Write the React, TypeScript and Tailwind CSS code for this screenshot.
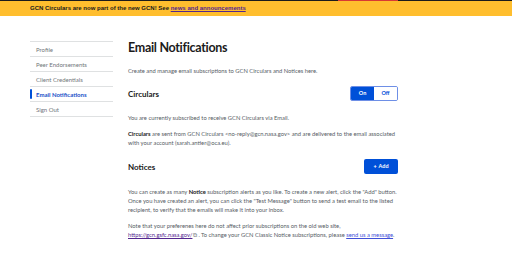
const navItems = [
  { label: "Profile", active: false },
  { label: "Peer Endorsements", active: false },
  { label: "Client Credentials", active: false },
  { label: "Email Notifications", active: true },
  { label: "Sign Out", active: false },
];

export default function App() {
  return (
    <div className="h-[254px] w-[512px] overflow-hidden bg-white font-['Lato',sans-serif] text-[#1b1b1b]">
      {/* Top strip */}
      <div className="flex h-[1px] bg-[#1b1b1b]">
        <div className="w-[338px]" />
        <div className="w-[60px] bg-[#d83933]" />
      </div>

      {/* Announcement banner */}
      <div className="flex h-[15px] items-center bg-[#ffbe2e] pl-[30px] font-['Liberation_Sans',Arial,sans-serif] text-[6px] font-bold">
        GCN Circulars are now part of the new GCN! See&nbsp;
        <a className="text-[#54278f] underline">news and announcements</a>
      </div>

      <div className="flex pl-[30px] pt-[25px]">
        {/* Side nav */}
        <nav className="w-[83px] shrink-0">
          <ul className="border-t border-[#dfe1e2]">
            {navItems.map((item) => (
              <li
                key={item.label}
                className="relative flex h-[15px] items-center border-b border-[#dfe1e2] pl-[6px] text-[6px]"
              >
                {item.active && (
                  <span className="absolute top-[2px] bottom-[2px] left-0 w-[2px] rounded-full bg-[#0050d8]" />
                )}
                <span
                  className={
                    item.active
                      ? "font-bold text-[#1a4fc8]"
                      : "text-[#71767a]"
                  }
                >
                  {item.label}
                </span>
              </li>
            ))}
          </ul>
        </nav>

        {/* Main */}
        <main className="ml-[15px] w-[276px] text-[5.8px] leading-[9px] text-[#565c65]">
          <h1 className="mt-[-1px] text-[12.5px] leading-[16px] font-bold tracking-[-0.3px] text-[#1b1b1b]">
            Email Notifications
          </h1>
          <p className="mt-[10px]">
            Create and manage email subscriptions to GCN Circulars and Notices here.
          </p>

          <div className="mt-[11px] mr-[6px] flex items-center justify-between">
            <h2 className="text-[8px] leading-[12px] font-bold text-[#1b1b1b]">Circulars</h2>
            <div className="flex h-[15px] overflow-hidden rounded-[2px] border border-[#6e8fe6] text-[5.5px] font-bold">
              <button className="w-[23px] bg-[#0050d8] text-white">On</button>
              <button className="w-[23px] bg-white text-[#0050d8]">Off</button>
            </div>
          </div>

          <p className="mt-[12px]">You are currently subscribed to receive GCN Circulars via Email.</p>
          <p className="mt-[7px]">
            <b className="text-[#1b1b1b]">Circulars</b> are sent from GCN Circulars
            &lt;no-reply@gcn.nasa.gov&gt; and are delivered to the email associated
            with your account (sarah.antier@oca.eu).
          </p>

          <div className="mt-[12px] mr-[6px] flex items-center justify-between">
            <h2 className="text-[8px] leading-[12px] font-bold text-[#1b1b1b]">Notices</h2>
            <button className="flex h-[15px] w-[34px] items-center justify-center gap-[2px] rounded-[2px] bg-[#0050d8] text-[5.5px] font-bold text-white">
              <span>+</span>
              <span>Add</span>
            </button>
          </div>

          <p className="mt-[13px]">
            You can create as many <b className="text-[#1b1b1b]">Notice</b> subscription
            alerts as you like. To create a new alert, click the "Add" button. Once you
            have created an alert, you can click the "Test Message" button to send a test
            email to the listed recipient, to verify that the emails will make it into
            your inbox.
          </p>
          <p className="mt-[7px]">
            Note that your preferenes here do not affect prior subscriptions on the old
            web site,{" "}
            <a className="text-[#54278f] underline">https://gcn.gsfc.nasa.gov/</a>
            <span className="mx-[1px] text-[#71767a]">⧉</span>. To change your GCN
            Classic Notice subscriptions, please{" "}
            <a className="text-[#4150d8] underline">send us a message</a>.
          </p>
        </main>
      </div>
    </div>
  );
}
